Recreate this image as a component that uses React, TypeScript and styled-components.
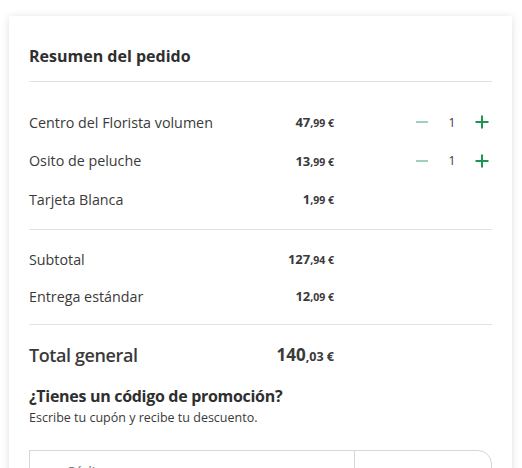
import React from "react";
import styled, { createGlobalStyle } from "styled-components";

const Global = createGlobalStyle`
  html, body { margin: 0; padding: 0; background: #ffffff; }
  body { font-family: "Open Sans", "Noto Sans", sans-serif; color: #3a3a3a; }
  #root { height: 468px; overflow: hidden; }
`;

const Page = styled.div`
  padding: 16px 10px 0 9px;
`;

const Card = styled.section`
  background: #fff;
  box-shadow: 0 1px 8px rgba(0, 0, 0, 0.13);
  padding: 0 20px 40px 20px;
  height: 520px;
  box-sizing: border-box;
`;

const Title = styled.h2`
  margin: 0;
  padding: 30px 0 15px 0;
  font-size: 16px;
  font-weight: 700;
  color: #2f2f2f;
  line-height: 20px;
  border-bottom: 1px solid #e2e2e2;
`;

const Section = styled.div<{ $top: number; $bottom: number }>`
  display: flex;
  flex-direction: column;
  padding: ${(p) => p.$top}px 0 ${(p) => p.$bottom}px;
  border-bottom: 1px solid #e2e2e2;
`;

const Row = styled.div<{ $h?: number }>`
  display: grid;
  grid-template-columns: 1fr 90px 158px;
  align-items: center;
  height: ${(p) => p.$h ?? 38.5}px;
`;

const Name = styled.span<{ $big?: boolean }>`
  font-size: ${(p) => (p.$big ? "18px" : "14.3px")};
  font-weight: ${(p) => (p.$big ? 600 : 400)};
  color: #3a3a3a;
  letter-spacing: ${(p) => (p.$big ? "-0.4px" : "0")};
`;

const Price = styled.span<{ $big?: boolean }>`
  text-align: right;
  font-weight: 700;
  color: #3a3a3a;
  font-size: ${(p) => (p.$big ? "17px" : "13px")};
  white-space: nowrap;
`;

const Cents = styled.span<{ $big?: boolean }>`
  font-size: ${(p) => (p.$big ? "12.5px" : "10.5px")};
`;

const Qty = styled.div`
  display: flex;
  justify-content: flex-end;
  align-items: center;
  gap: 18px;
  padding-right: 2px;
`;

const QtyBtn = styled.button<{ $light?: boolean }>`
  border: none;
  background: none;
  padding: 0;
  width: 16px;
  height: 16px;
  display: flex;
  align-items: center;
  justify-content: center;
  color: ${(p) => (p.$light ? "#9ed2b6" : "#1f9254")};
  cursor: pointer;
`;

const QtyNum = styled.span`
  font-size: 12px;
  color: #3a3a3a;
  width: 8px;
  text-align: center;
`;

const Promo = styled.div`
  padding-top: 0;
`;

const PromoTitle = styled.h3`
  margin: 0;
  font-size: 16px;
  font-weight: 700;
  color: #2f2f2f;
  line-height: 22px;
  letter-spacing: -0.3px;
`;

const PromoText = styled.p`
  margin: 3px 0 0;
  font-size: 12.5px;
  line-height: 16px;
  color: #3a3a3a;
`;

const PromoForm = styled.div`
  margin-top: 24px;
  display: flex;
  height: 44px;
`;

const PromoInput = styled.input`
  flex: 1;
  border: 1px solid #d6d6d6;
  border-right: none;
  padding: 0 36px;
  font-family: inherit;
  font-size: 14px;
  outline: none;
`;

const PromoButton = styled.button`
  width: 138px;
  border: 1px solid #d6d6d6;
  border-radius: 0 14px 14px 0;
  background: #fff;
  font-family: inherit;
  font-size: 14px;
  color: #3a3a3a;
  padding-top: 18px;
`;

const Minus = () => (
  <svg width="14" height="14" viewBox="0 0 14 14">
    <path d="M1 7h12" stroke="currentColor" strokeWidth="2" />
  </svg>
);
const Plus = () => (
  <svg width="14" height="14" viewBox="0 0 14 14">
    <path d="M0.5 7h13M7 0.5v13" stroke="currentColor" strokeWidth="2" />
  </svg>
);

const Amount = ({ e, c, big }: { e: string; c: string; big?: boolean }) => (
  <Price $big={big}>
    {e}
    <Cents $big={big}>,{c} €</Cents>
  </Price>
);

const items = [
  { name: "Centro del Florista volumen", e: "47", c: "99", qty: true },
  { name: "Osito de peluche", e: "13", c: "99", qty: true },
  { name: "Tarjeta Blanca", e: "1", c: "99", qty: false },
];

export default function App() {
  return (
    <Page>
      <Global />
      <Card>
        <Title>Resumen del pedido</Title>
        <Section $top={21} $bottom={10}>
          {items.map((it) => (
            <Row key={it.name}>
              <Name>{it.name}</Name>
              <Amount e={it.e} c={it.c} />
              {it.qty ? (
                <Qty>
                  <QtyBtn $light aria-label="menos">
                    <Minus />
                  </QtyBtn>
                  <QtyNum>1</QtyNum>
                  <QtyBtn aria-label="más">
                    <Plus />
                  </QtyBtn>
                </Qty>
              ) : (
                <span />
              )}
            </Row>
          ))}
        </Section>
        <Section $top={11} $bottom={9}>
          <Row $h={37}>
            <Name>Subtotal</Name>
            <Amount e="127" c="94" />
            <span />
          </Row>
          <Row $h={37}>
            <Name>Entrega estándar</Name>
            <Amount e="12" c="09" />
            <span />
          </Row>
        </Section>
        <Row $h={60}>
          <Name $big>Total general</Name>
          <Amount e="140" c="03" big />
          <span />
        </Row>
        <Promo>
          <PromoTitle>¿Tienes un código de promoción?</PromoTitle>
          <PromoText>Escribe tu cupón y recibe tu descuento.</PromoText>
          <PromoForm>
            <PromoInput placeholder="Código" />
            <PromoButton>Aplicar</PromoButton>
          </PromoForm>
        </Promo>
      </Card>
    </Page>
  );
}
